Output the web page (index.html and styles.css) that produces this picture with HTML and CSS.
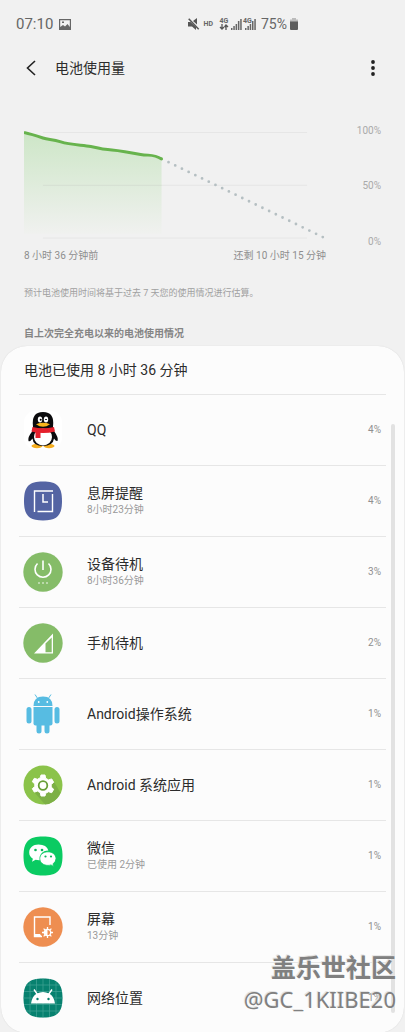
FILE: index.html
```html
<!DOCTYPE html>
<html lang="zh-CN">
<head>
<meta charset="utf-8">
<meta name="viewport" content="width=device-width, initial-scale=1">
<title>电池使用量</title>
<link rel="stylesheet" href="styles.css">
</head>
<body>
<div class="screen">
  <div class="status">
    <span class="status-time">07:10</span>
    <svg class="i-photo" width="12" height="11" viewBox="0 0 12 11"><path fill="#666" fill-rule="evenodd" d="M0 0h12v11H0zM1.200 1.200V8L4 6l2 1.500L8.500 5l2.300 3V1.200zM3 2.500h2v1.500H3z"/></svg>
    <div class="status-right">
      <svg width="12" height="12" viewBox="0 0 12 12"><path fill="#555" d="M0 4h2.500L8 9v3L4 8.500H0zM5 3l4-3v6.500z"/><path d="M.7.700l10 10.600" stroke="#555" stroke-width="1.500"/></svg>
      <span class="hd">HD</span>
      <span class="net"><span>4G</span><svg width="10" height="6" viewBox="0 0 10 6"><path d="M3 0v5M1 3l2 2 2-2M7 6V1M5.500 3L7 1l2 2" fill="none" stroke="#555" stroke-width="1.300"/></svg></span>
      <svg class="sig1" width="11" height="12" viewBox="0 0 11 12"><path fill="#666" d="M0 10h1.500v2H0zM2.300 8h1.500v4H2.300zM4.600 6h1.500v6H4.600zM6.900 3h1.500v9H6.900zM9.200 1h1.500v11H9.200z"/></svg>
      <span class="net second"><span>4G</span><svg width="13" height="12" viewBox="0 0 13 12"><path fill="#666" d="M2 10h1.500v2H2zM4.400 8h1.500v4H4.400zM6.700 6h1.500v6H6.700zM9 3h1.500v9H9zM11.300 1h1.500v11h-1.500z"/></svg></span>
      <span class="battery-text">75%</span>
      <svg width="8" height="12" viewBox="0 0 8 12"><path fill="#bbb" d="M2 0h4v1.500h2V4H0V1.500h2z"/><path fill="#5c5c5c" d="M0 3.500h8V11q0 1-1 1H1q-1 0-1-1z"/></svg>
    </div>
  </div>

  <header class="bar">
    <button class="icon-btn" aria-label="返回"><svg width="10" height="16" viewBox="0 0 10 16"><path d="M9 1L1.500 8 9 15" fill="none" stroke="#222" stroke-width="1.600"/></svg></button>
    <h1>电池使用量</h1>
    <button class="icon-btn more" aria-label="更多选项"><svg width="4" height="16" viewBox="0 0 4 16" fill="#222"><circle cx="2" cy="2" r="1.900"/><circle cx="2" cy="8" r="1.900"/><circle cx="2" cy="14" r="1.900"/></svg></button>
  </header>

  <section class="chart">
    <div class="plot">
      <svg viewBox="0 0 303 111">
        <defs><linearGradient id="fade" x1="0" y1="0" x2="0" y2="1"><stop offset="0" stop-color="#cde6c7"/><stop offset="1" stop-color="#f0f1ef"/></linearGradient></defs>
        <path d="M19 4.500H284M19 57.500H284M19 110.500H284" stroke="#e6e6e6"/>
        <path d="M0 4.500C7 6 13 8 19 10S28 11 37 14 58 17 67 18.500 75 21 84 21.500 108 25 117 26.500 130 26 138 31V106H0z" fill="url(#fade)"/>
        <path d="M19 57.500H138" stroke="#d5dfd2"/>
        <path d="M0 4.500C7 6 13 8 19 10S28 11 37 14 58 17 67 18.500 75 21 84 21.500 108 25 117 26.500 130 26 138 31" fill="none" stroke="#67b34d" stroke-width="3"/>
        <circle cx="138" cy="31" r="1.500" fill="#67b34d"/>
        <path d="M145 34.300L301 110" fill="none" stroke="#b5bfc2" stroke-width="2.800" stroke-linecap="round" stroke-dasharray="0 7.480"/>
      </svg>
      <div class="times"><span>8 小时 36 分钟前</span><span>还剩 10 小时 15 分钟</span></div>
    </div>
    <div class="scale"><span>100%</span><span>50%</span><span>0%</span></div>
  </section>
  <p class="note">预计电池使用时间将基于过去 7 天您的使用情况进行估算。</p>
  <h2 class="section-title">自上次完全充电以来的电池使用情况</h2>

  <main class="card">
    <h3>电池已使用 8 小时 36 分钟</h3>
    <ul class="apps">
      <li>
        <svg class="app-icon" viewBox="0 0 40 40"><rect x="1" y="1" width="38" height="38" rx="11" fill="#fff"/><ellipse cx="14" cy="36" rx="5.500" ry="2.200" fill="#f5ae20"/><ellipse cx="26" cy="36" rx="5.500" ry="2.200" fill="#f5ae20"/><path d="M10 17Q8 2 20 2T30 17L31 21Q36 28 34.500 31 33 31.500 31 28.500 30 36 20 36T9.500 28.500Q7 32 5.500 31 4.500 27 9.500 21z" fill="#0b0b0d"/><ellipse cx="20" cy="27" rx="9" ry="8.500" fill="#fff"/><path d="M9.500 17Q20 19.500 31 17L32 21.500Q20 24.500 8.500 21.500z" fill="#e5202c"/><path d="M12.500 21l5 1V28h-5z" fill="#e5202c"/><ellipse cx="17" cy="9.500" rx="2.200" ry="2.900" fill="#fff"/><ellipse cx="23" cy="9.500" rx="2.200" ry="2.900" fill="#fff"/><circle cx="17.700" cy="9.700" r="1"/><path d="M22 10q1-2 2 0" fill="none" stroke="#000" stroke-width=".8"/><path d="M13 14.200Q20 11.500 27 14.200 20 19.500 13 14.200z" fill="#f9b51b"/></svg>
        <div class="name">QQ</div><span class="pct">4%</span>
      </li>
      <li>
        <svg class="app-icon" viewBox="0 0 40 40"><path d="M20 .5C34 .5 39 5.500 39 20S34 39.500 20 39.500 1 34.500 1 20 6 .5 20 .5z" fill="#5464a3"/><path d="M11.500 31V10H30M29.500 13V30.500H14.500" fill="none" stroke="#fff" stroke-width="1.400"/><path d="M20 13v8h5" fill="none" stroke="#fff" stroke-width="1.500"/></svg>
        <div class="name">息屏提醒<small>8小时23分钟</small></div><span class="pct">4%</span>
      </li>
      <li>
        <svg class="app-icon" viewBox="0 0 40 40"><circle cx="20" cy="20" r="19.700" fill="#85bc68"/><path d="M20 8.500V18M14.500 11.500a8 8 0 1 0 11 0" fill="none" stroke="#fff" stroke-width="1.600"/><g fill="#fff"><circle cx="16" cy="31" r=".8"/><circle cx="20" cy="31" r=".8"/><circle cx="24" cy="31" r=".8"/></g></svg>
        <div class="name">设备待机<small>8小时36分钟</small></div><span class="pct">3%</span>
      </li>
      <li>
        <svg class="app-icon" viewBox="0 0 40 40"><circle cx="20" cy="20" r="19.700" fill="#85bc68"/><path fill="#fff" fill-rule="evenodd" d="M30 10.500V30.500H11zM28.700 14.500L22.500 20.500V29.200H28.700z"/></svg>
        <div class="name">手机待机</div><span class="pct">2%</span>
      </li>
      <li>
        <svg class="app-icon" viewBox="0 0 40 40"><g fill="#57bce2"><path d="M10.500 12Q10.500 2.500 20 2.500T29.500 12z"/><path d="M12 .5L15 5M28 .5L25 5" stroke="#57bce2"/><path d="M10.500 13h19v16.500q0 2-2 2h-15q-2 0-2-2z"/><rect x="3.500" y="13" width="5" height="16.500" rx="2.500"/><rect x="31.500" y="13" width="5" height="16.500" rx="2.500"/><rect x="13.500" y="26" width="5" height="13.500" rx="2.500"/><rect x="21.500" y="26" width="5" height="13.500" rx="2.500"/></g><circle cx="15.700" cy="8" r=".9" fill="#fff"/><circle cx="24.300" cy="8" r=".9" fill="#fff"/></svg>
        <div class="name">Android操作系统</div><span class="pct">1%</span>
      </li>
      <li>
        <svg class="app-icon" viewBox="0 0 40 40"><circle cx="20" cy="20" r="19.500" fill="#8bc34a"/><path d="M29 13L37.500 28Q32 39 22 39.500L12 28z" fill="#7db046"/><path fill="#fff" fill-rule="evenodd" stroke="#fff" stroke-linejoin="round" d="M18 10h4l.7 3.300 2.800 1.600 3.200-1 2 3.400-2.500 2.200v2.600l2.500 2.200-2 3.400-3.200-1-2.800 1.600L22 31h-4l-.7-3.300-2.800-1.600-3.200 1-2-3.400 2.500-2.200v-2.600l-2.500-2.200 2-3.400 3.200 1 2.800-1.600z"/><circle cx="20" cy="20.500" r="4.300" fill="#fff" stroke="#689f38" stroke-width="1.800"/></svg>
        <div class="name">Android 系统应用</div><span class="pct">1%</span>
      </li>
      <li>
        <svg class="app-icon" viewBox="0 0 40 40"><path d="M20 .5C34 .5 39.500 5.500 39.500 20S34 39.500 20 39.500.5 34.500.5 20 6 .5 20 .5z" fill="#0acb62"/><path d="M15.500 8.500C10 8.500 6.200 12 6.200 16.400q0 4 3.700 6.300L9 25.800l3.600-2q2 .6 5 .4-2-9 7.800-9.600-1.700-6.100-9.900-6.100z" fill="#fff"/><path d="M25 15.800c-5 0-8.200 3-8.200 6.800s3.300 6.800 8.200 6.800q1.600 0 3-.5l2.700 1.600-.7-2.600q3-2.100 3-5.300c0-3.800-3.500-6.800-8-6.800z" fill="#fff" stroke="#0acb62" stroke-width=".8"/><g fill="#0bb75a"><circle cx="12.500" cy="14" r="1.300"/><circle cx="19" cy="14" r="1.300"/><circle cx="22.500" cy="20.500" r="1.100"/><circle cx="28" cy="20.500" r="1.100"/></g></svg>
        <div class="name">微信<small>已使用 2分钟</small></div><span class="pct">1%</span>
      </li>
      <li>
        <svg class="app-icon" viewBox="0 0 40 40"><circle cx="20" cy="20" r="19.700" fill="#ee8e51"/><path d="M27 18V10H11.500V29.500H19" fill="none" stroke="#fff" stroke-width="1.400"/><path d="M11 27h6l2 3h-8z" fill="#fff"/><circle cx="24.500" cy="25.500" r="3.200" fill="none" stroke="#fff" stroke-width="1.300"/><path d="M24.500 22.500a3 3 0 0 0 0 6z" fill="#fff"/><path d="M24.500 20v2M24.500 29v2M19 25.500h2M28 25.500h2M20.600 21.600l1.300 1.300M27.100 28.100l1.300 1.300M28.400 21.600l-1.300 1.300M21.900 28.100l-1.300 1.300" stroke="#fff" stroke-width="1.300"/></svg>
        <div class="name">屏幕<small>13分钟</small></div><span class="pct">1%</span>
      </li>
      <li>
        <svg class="app-icon" viewBox="0 0 40 40"><path d="M20 .5C34 .5 39.500 5.500 39.500 20S34 39.500 20 39.500.5 34.500.5 20 6 .5 20 .5z" fill="#07816f"/><path d="M7 4V36M13.500 1V39M20 .500V39.500M26.500 1V39M33 4V36M3 7H37M1 13.500H39M.5 20H39.500M1 26.500H39M3 33H37" stroke="#43a396" stroke-width=".7"/><path d="M8 25.500Q9 18 14 15.500 20 12.500 26 15.500 31 18 32 25.500z" fill="#fff"/><path d="M14.500 16.500l-3.500-5M25.500 16.500l3.500-5" stroke="#fff" stroke-width="1.400"/><circle cx="14.500" cy="21" r="1.200" fill="#07816f"/><circle cx="25.500" cy="21" r="1.200" fill="#07816f"/></svg>
        <div class="name">网络位置</div><span class="pct">1%</span>
      </li>
    </ul>
    <div class="scrollbar"></div>
  </main>
  <div class="watermark"><b>盖乐世社区</b><span>@GC_1KIIBE20</span></div>
</div>
</body>
</html>
```

FILE: styles.css
```css
* { box-sizing: border-box; }
body {
  margin: 0;
  background: #f1f1f1;
  color: #2c2c2c;
  font-family: Roboto, "Noto Sans CJK SC", sans-serif;
}
h1, h2, h3, p, ul { margin: 0; padding: 0; font-weight: 400; }
ul { list-style: none; }
svg { display: block; flex: none; }
.screen { position: relative; padding-bottom: 1px; }

.status {
  display: flex;
  align-items: center;
  height: 48px;
  padding: 0 107px 0 16px;
  color: #666;
}
.status-time { font-size: 15px; line-height: 20px; }
.i-photo { margin-left: 6px; }
.status-right { display: flex; align-items: center; margin-left: auto; }
.hd { margin-left: 4px; font-size: 7px; font-weight: 700; line-height: 10px; }
.net { display: flex; flex-direction: column; align-items: center; margin-left: 6px; font-size: 7px; font-weight: 700; line-height: 6px; }
.sig1 { margin-left: 2px; }
.second { position: relative; margin-left: 1px; }
.second span { position: absolute; left: 0; top: 0; background: #f1f1f1; }
.battery-text { margin: 0 3px 0 5px; font-size: 14px; line-height: 20px; }

.bar { display: flex; align-items: center; height: 40px; padding: 0 20px 0 19px; }
.icon-btn {
  display: flex;
  align-items: center;
  justify-content: center;
  width: 24px;
  height: 32px;
  padding: 0;
  border: 0;
  background: none;
}
.bar h1 { flex: 1; margin-left: 12px; font-size: 14px; line-height: 20px; }

.chart { display: flex; justify-content: space-between; padding: 40px 24px 0; }
.plot { flex: 1; }
.plot svg { width: 100%; height: auto; }
.times { display: flex; justify-content: space-between; margin-top: 9px; color: #8e8e8e; font-size: 10px; line-height: 16px; }
.scale {
  display: flex;
  flex-direction: column;
  justify-content: space-between;
  width: 55px;
  margin: -3px 0 16px;
  color: #aaa;
  font-size: 10px;
  line-height: 12px;
  text-align: right;
}
.note { margin: 21px 24px 0; color: #a0a0a0; font-size: 9px; line-height: 16px; }
.section-title { margin: 24px 24px 0; color: #858585; font-size: 10px; font-weight: 700; line-height: 18px; }

.card {
  position: relative;
  margin: 3px 1px 0;
  padding: 0 18px;
  border-radius: 26px;
  background: #fcfcfc;
  box-shadow: 0 0 1px #ccc;
}
.card h3 { padding: 14px 5px; font-size: 14px; line-height: 20px; }
.apps li {
  display: flex;
  align-items: center;
  height: 71px;
  padding: 0 5px 0 4px;
  border-top: 1px solid #e6e6e6;
}
.app-icon { width: 40px; height: 40px; }
.name { flex: 1; margin-left: 24px; font-size: 14px; line-height: 18px; }
.name small { display: block; color: #999; font-size: 10px; line-height: 16px; }
.pct { color: #909090; font-size: 10px; line-height: 14px; }
.scrollbar {
  position: absolute;
  top: 78px;
  right: 9px;
  bottom: 20px;
  width: 4px;
  border-radius: 2px;
  background: #e2e2e2;
}
.watermark {
  position: absolute;
  right: 9px;
  bottom: 19px;
  display: flex;
  flex-direction: column;
  align-items: flex-end;
  color: #808080;
  font-family: "Noto Sans", "Noto Sans CJK SC", sans-serif;
  text-shadow: -1px -1px #e4e4e4;
}
.watermark b { font-size: 25px; font-weight: 700; line-height: 32px; }
.watermark span { font-size: 22px; line-height: 32px; }
```
